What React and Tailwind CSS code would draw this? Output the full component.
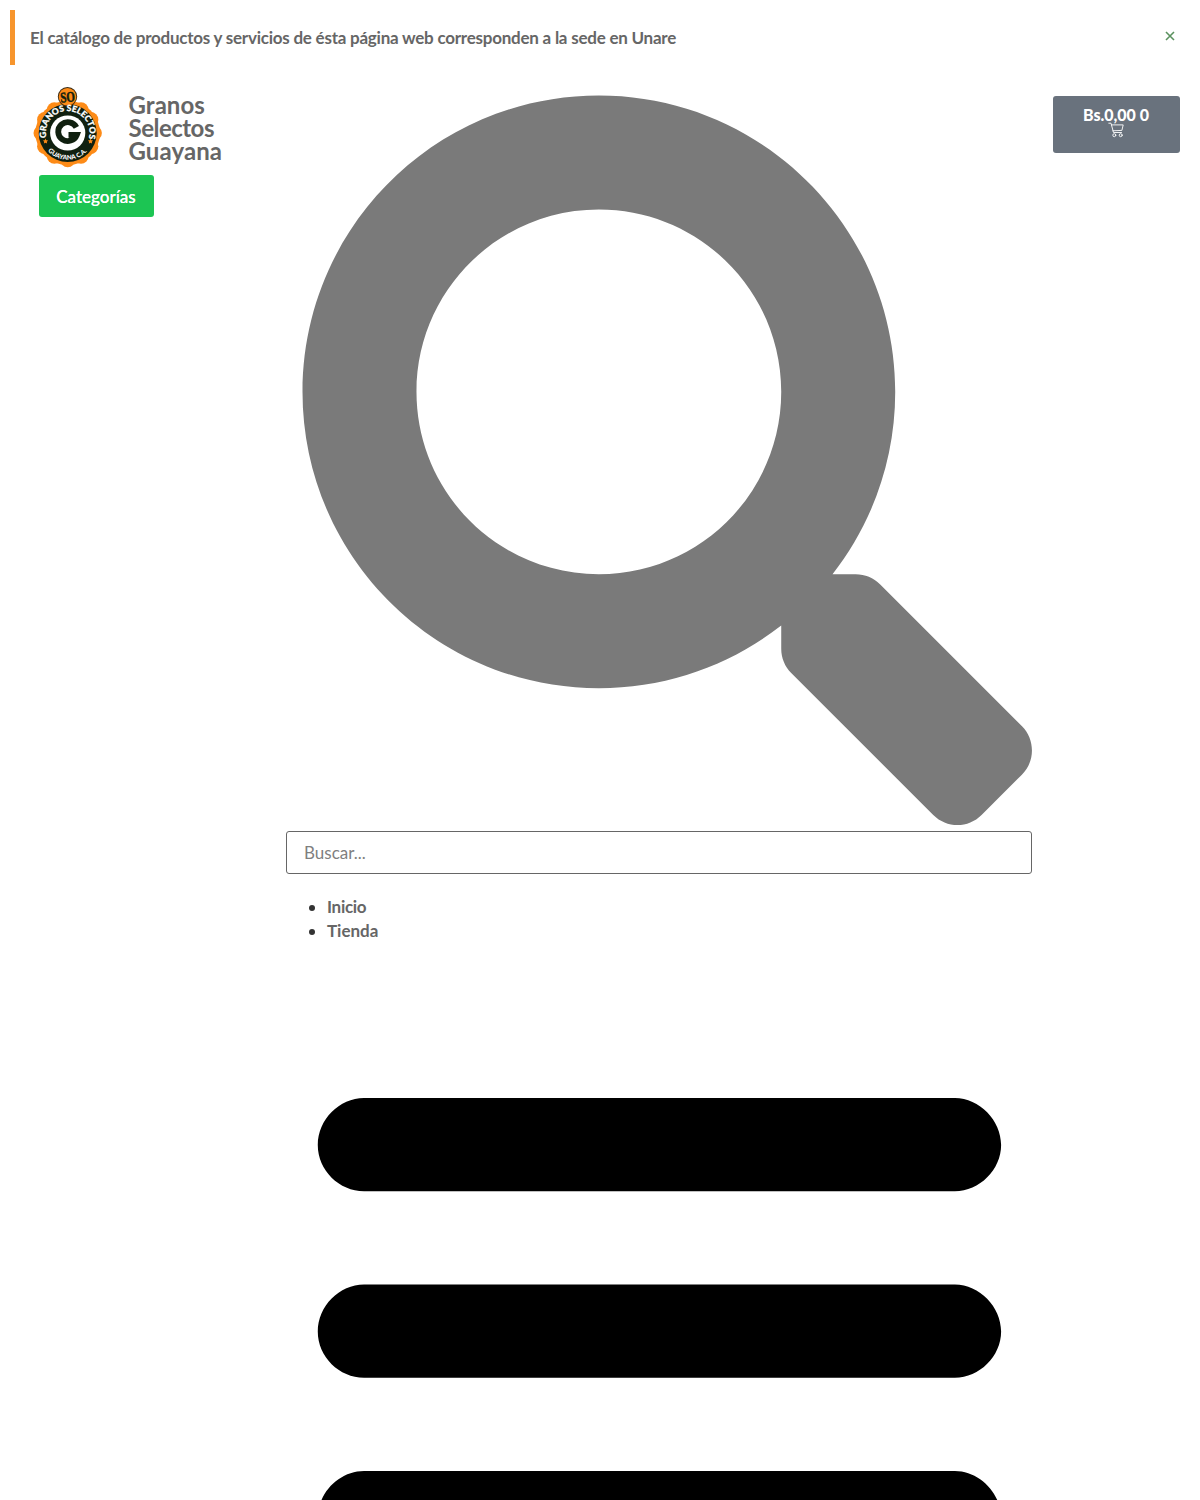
import React from "react";

const SCALLOPS = Array.from({ length: 12 }, (_, i) => {
  const a = (i * Math.PI) / 6;
  return [47.7 + 26.6 * Math.cos(a), 53 + 26.6 * Math.sin(a)];
});

function Logo() {
  return (
    <svg viewBox="0 0 100 100" className="h-[100px] w-[100px] shrink-0" role="img" aria-label="Granos Selectos Guayana">
      <defs>
        <path id="arc-top" d="M27 59.7A21.8 21.8 0 1 1 68.4 59.7" />
        <path id="arc-bottom" d="M27.2 70.2A26.8 26.8 0 0 0 68.2 70.2" />
      </defs>
      <g fill="#fd8b17">
        <circle cx="47.7" cy="53" r="32.3" />
        {SCALLOPS.map(([x, y], i) => (
          <circle key={i} cx={x} cy={y} r="7.6" />
        ))}
      </g>
      <circle cx="47.7" cy="53" r="29" fill="#10200f" />
      <circle cx="47.5" cy="16.7" r="9.7" fill="#3a2a12" />
      <circle cx="47.5" cy="16.7" r="8.8" fill="#fd8b17" />
      <text x="47.5" y="22" textAnchor="middle" fontSize="14.5" fontWeight="700" textLength="14.6" lengthAdjust="spacingAndGlyphs" fontFamily="Liberation Serif, serif" fill="#10200f" stroke="#10200f" strokeWidth="0.5" transform="rotate(-5 47.5 17)">SO</text>
      <circle cx="47.7" cy="53" r="17.6" fill="#fff" />
      <path d="M56.4 47.4A9.6 9.4 0 1 0 56.8 54.9H48.5" fill="none" stroke="#10200f" strokeWidth="5.8" />
      <text fontSize="8.6" fontWeight="900" fontFamily="Lato, sans-serif" fill="#fff" stroke="#fff" strokeWidth="0.25">
        <textPath href="#arc-top" startOffset="2" textLength="79">GRANOS SELECTOS</textPath>
      </text>
      <text fontSize="6.4" fontWeight="900" fontFamily="Lato, sans-serif" fill="#fff">
        <textPath href="#arc-bottom" startOffset="1" textLength="44">GUAYANA C.A.</textPath>
      </text>
      <g fill="#fd8b17">
        <path id="star" d="M25.5 58.6l.8 1.6 1.8.3-1.3 1.3.3 1.8-1.6-.9-1.6.9.3-1.8-1.3-1.3 1.8-.3z" />
        <use href="#star" x="45" />
      </g>
    </svg>
  );
}

function SearchIcon() {
  return (
    <svg viewBox="-0.35 -0.35 512 512" className="ml-4 block h-[729.5px] w-[729.5px] overflow-visible fill-[#7a7a7a]">
      <path d="M505 442.7L405.3 343c-4.5-4.5-10.6-7-17-7H372c27.6-35.3 44-79.7 44-128C416 93.1 322.9 0 208 0S0 93.1 0 208s93.1 208 208 208c48.3 0 92.7-16.4 128-44v16.3c0 6.4 2.5 12.5 7 17l99.7 99.7c9.4 9.4 24.6 9.4 33.9 0l28.3-28.3c9.4-9.4 9.4-24.6.1-34zM208 336c-70.7 0-128-57.2-128-128 0-70.7 57.2-128 128-128 70.7 0 128 57.2 128 128 0 70.7-57.2 128-128 128z" />
    </svg>
  );
}

function MenuIcon() {
  return (
    <svg viewBox="-0.6 0.3 1000 1000" className="-mt-px block h-[746px] w-[746px] shrink-0 fill-black">
      <path d="M104 333H896C929 333 958 304 958 271S929 208 896 208H104C71 208 42 237 42 271S71 333 104 333ZM104 583H896C929 583 958 554 958 521S929 458 896 458H104C71 458 42 487 42 521S71 583 104 583ZM104 833H896C929 833 958 804 958 771S929 708 896 708H104C71 708 42 737 42 771S71 833 104 833Z" />
    </svg>
  );
}

function CartIcon() {
  return (
    <svg viewBox="0 0 16 16" className="-mt-px h-4 w-4" fill="none" stroke="#fff" strokeWidth="0.9" strokeLinecap="round" strokeLinejoin="round">
      <path d="M.8 1.2H3l2.5 9.3h8M3.4 2.9h11.8l-1.3 5.5-9 .4" />
      <circle cx="6.3" cy="13.2" r="1.5" />
      <circle cx="12.7" cy="13.2" r="1.5" />
    </svg>
  );
}

export default function App() {
  return (
    <div className="h-[1500px] w-[1200px] overflow-hidden bg-white font-['Lato',sans-serif] text-[#666]">
      <div className="px-[10px] pt-[10px]">
        <div className="flex h-[55px] items-center justify-between border-l-5 border-[#f7952d] pr-[15px] pl-[15px]">
          <p className="text-[17px] font-bold whitespace-nowrap tracking-[-0.235px]">
            El catálogo de productos y servicios de ésta página web corresponden a la sede en Unare
          </p>
          <button aria-label="Cerrar" className="-mt-[3px] text-[#5b925f]">
            <svg viewBox="0 0 10 10" className="h-[10px] w-[10px]" stroke="currentColor" strokeWidth="1.6">
              <path d="M1 1l8 8M9 1l-8 8" />
            </svg>
          </button>
        </div>
      </div>

      <div className="flex items-start">
        <div className="w-[286px] shrink-0 pt-[15px] pl-5">
          <div className="flex h-[95px] items-start">
            <Logo />
            <h1 className="mt-[13px] ml-[8.5px] text-[24px] leading-[23px] font-bold">
              <span className="block tracking-[0.05px]">Granos</span>
              <span className="block tracking-[-0.5px]">Selectos</span>
              <span className="block tracking-[0.1px]">Guayana</span>
            </h1>
          </div>
          <button className="ml-[18.5px] flex h-[42px] w-[115px] items-center justify-center rounded-[3px] bg-[#1cc553] pt-0.5 text-[17px] font-medium text-white [text-shadow:0_0_0.5px_#fff]">
            Categorías
          </button>
        </div>

        <main className="w-[746px] shrink-0 pt-[30px]">
          <SearchIcon />
          <input
            type="search"
            placeholder="Buscar..."
            className="mt-[6px] block h-[43px] w-full rounded-[3px] border border-[#666] px-[17px] text-[17px] placeholder:text-[#7f7f7f]"
          />
          <ul className="mt-[21px] list-disc pl-[41px] text-[17px] leading-[24.5px] font-bold marker:text-[#333]">
            <li className="tracking-[-0.3px]">Inicio</li>
            <li>Tienda</li>
          </ul>
          <MenuIcon />
        </main>

        <button className="mt-[30.5px] ml-[20.5px] flex h-[57px] w-[127px] flex-col items-center rounded-[3px] bg-[#69727d] pt-[11.5px] text-white">
          <span className="text-[16px] leading-4 font-black whitespace-nowrap">Bs.0,00 0</span>
          <CartIcon />
        </button>
      </div>
    </div>
  );
}
